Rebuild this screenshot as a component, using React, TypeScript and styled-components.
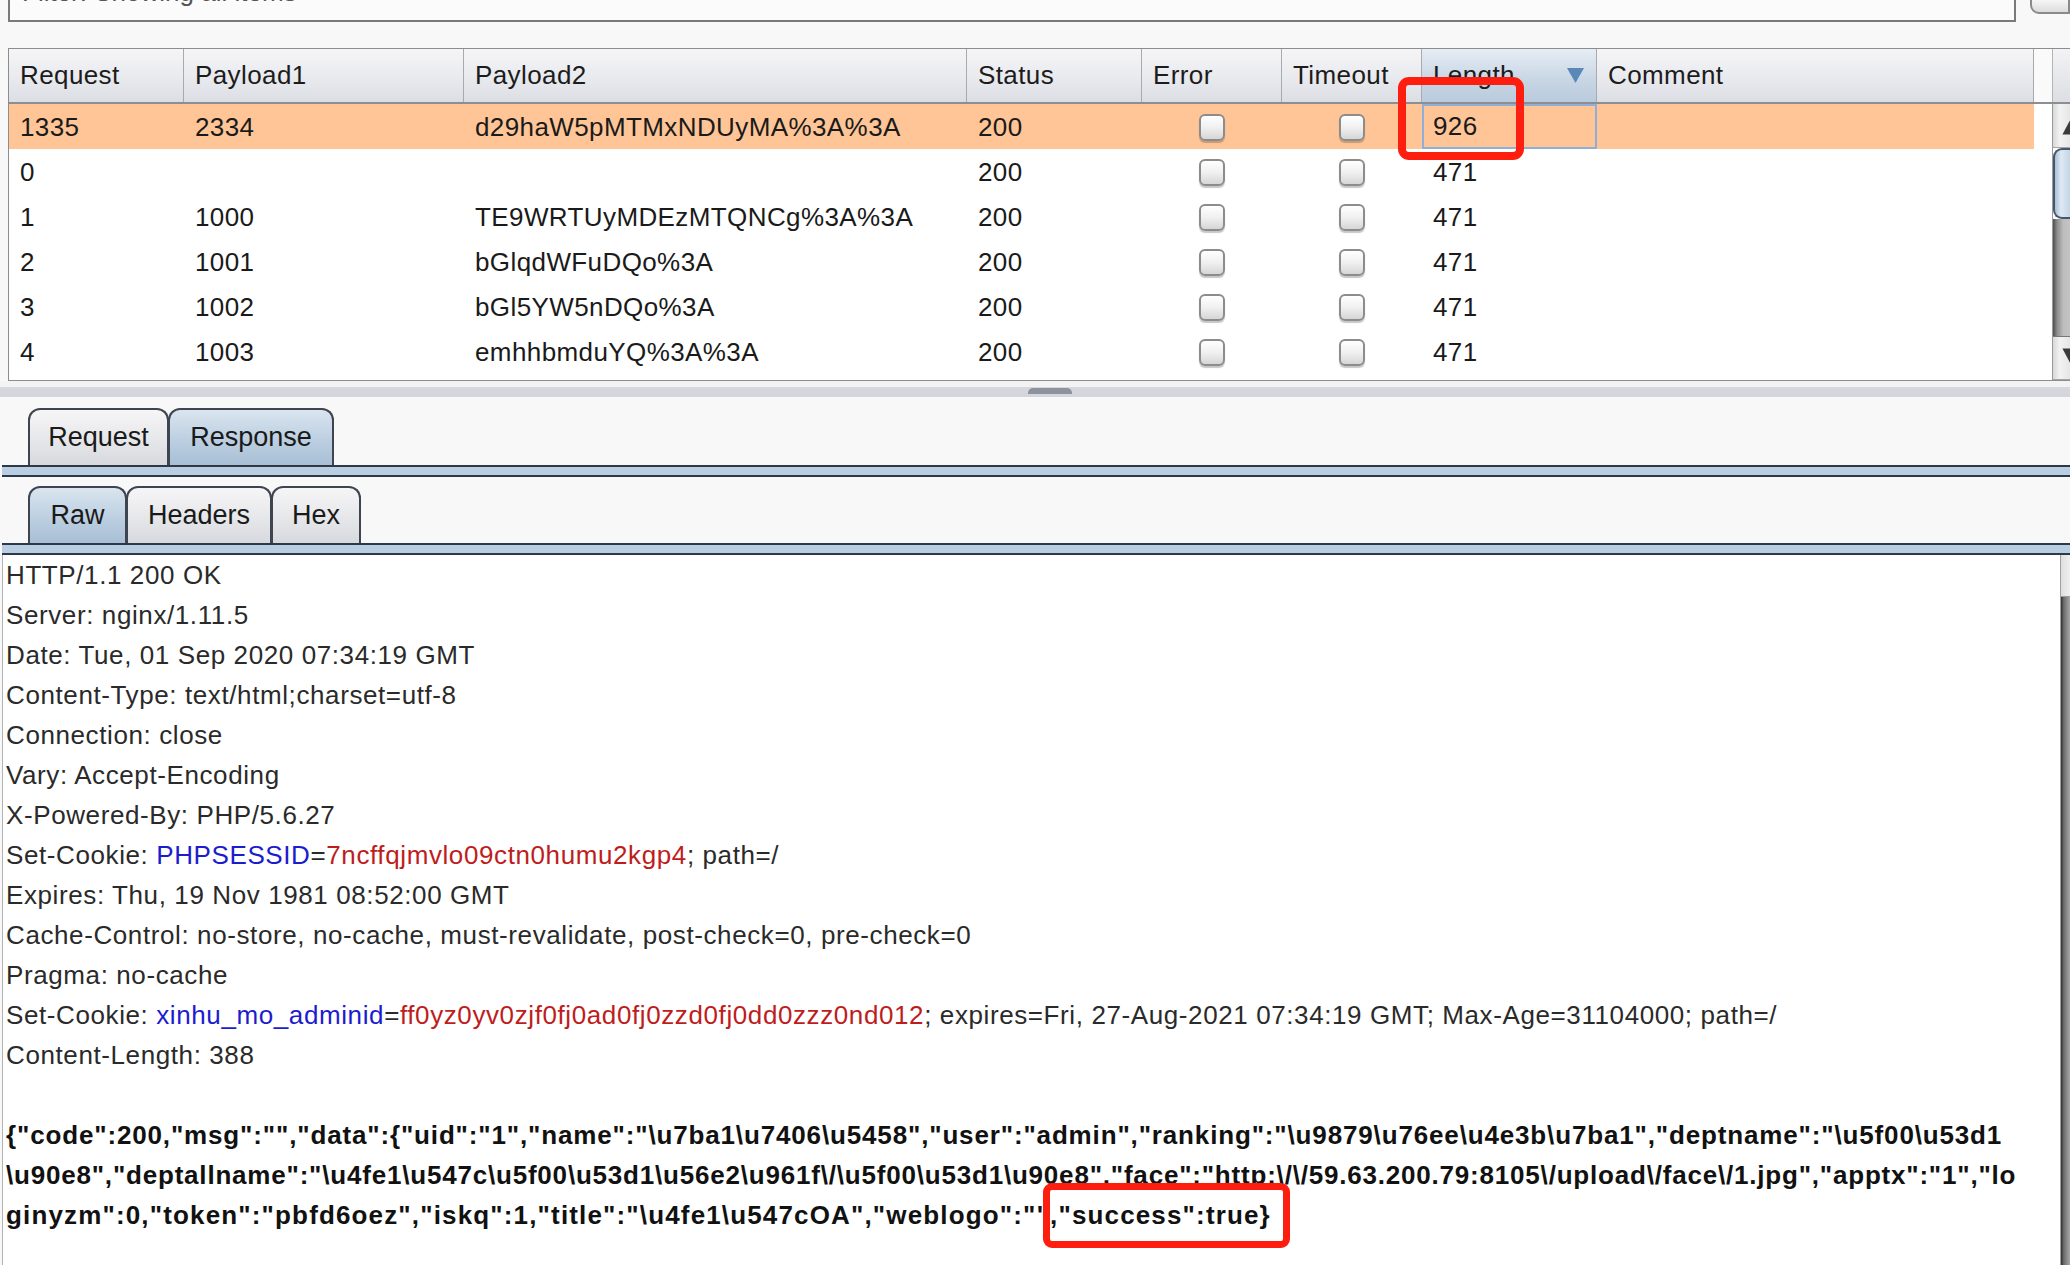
import React from 'react';
import styled, { createGlobalStyle, css } from 'styled-components';

const FONT = `"Liberation Sans", Arial, sans-serif`;

const GlobalStyle = createGlobalStyle`
  html, body { margin: 0; padding: 0; background: #f8f8f8; }
  body { font-family: ${FONT}; overflow: hidden; }
  #root { width: 2070px; height: 1265px; overflow: hidden; }
  *, *::before, *::after { box-sizing: border-box; }
`;

const Page = styled.div`
  width: 2070px;
  height: 1265px;
  display: flex;
  flex-direction: column;
  background: #f8f8f8;
  font-family: ${FONT};
  color: #1b1b1b;
  overflow: hidden;
`;

/* ---------- filter bar (cut off at the top) ---------- */
const FilterRow = styled.div`
  display: flex;
  align-items: flex-end;
  height: 22px;
  flex-shrink: 0;
`;
const FilterBox = styled.div`
  margin-left: 8px;
  width: 2015px;
  height: 22px;
  border: 2px solid #7a7a7a;
  border-top: none;
  background: #fbfbfb;
  overflow: hidden;
  padding-left: 12px;
`;
const FilterText = styled.span`
  display: block;
  font-size: 26px;
  line-height: 30px;
  margin-top: -23px;
  color: #555;
  white-space: nowrap;
`;
const HelpButton = styled.div`
  margin-left: 14px;
  width: 40px;
  height: 14px;
  align-self: flex-start;
  border: 2px solid #8a8a8a;
  border-top: none;
  border-radius: 0 0 0 9px;
  background: linear-gradient(#f6f6f6, #dcdcdc);
  flex-shrink: 0;
`;

/* ---------- results table ---------- */
const COLS = '175px 280px 503px 175px 140px 140px 175px 437px';

const TableArea = styled.div`
  margin: 26px 0 0 8px;
  height: 333px;
  flex-shrink: 0;
  border: 1px solid #8d8d8d;
  border-right: none;
  display: flex;
  flex-direction: column;
  background: #fff;
`;
const HeaderRow = styled.div`
  display: flex;
  height: 55px;
  flex-shrink: 0;
  border-bottom: 2px solid #8c8e92;
`;
const HeaderGrid = styled.div`
  display: grid;
  grid-template-columns: ${COLS};
  width: 2025px;
  flex-shrink: 0;
`;
const HeaderCell = styled.div<{ $sorted?: boolean }>`
  display: flex;
  align-items: center;
  justify-content: space-between;
  padding: 0 12px 0 11px;
  font-size: 26px;
  letter-spacing: 0.4px;
  color: #1c1c1c;
  border-right: 1px solid #a8aaaf;
  white-space: nowrap;
  background: ${(p) =>
    p.$sorted
      ? 'linear-gradient(#e6edf4, #c9d7e5 55%, #b9cbdc)'
      : 'linear-gradient(#f5f5f7, #e9eaee 55%, #dcdee3)'};
`;
const SortArrow = styled.svg`
  width: 17px;
  height: 15px;
  flex-shrink: 0;
`;
const HeaderGap = styled.div`
  width: 18px;
  flex-shrink: 0;
  background: #fafafa;
`;
const HeaderCorner = styled.div`
  flex: 1;
  border-left: 1px solid #b5b5b5;
  background: linear-gradient(#f3f3f5, #dcdee3);
`;
const TableBody = styled.div`
  display: flex;
  flex: 1;
  min-height: 0;
`;
const RowsViewport = styled.div`
  flex: 1;
  background: #fff;
`;
const Row = styled.div<{ $selected?: boolean }>`
  display: grid;
  grid-template-columns: ${COLS};
  width: 2025px;
  height: 45px;
  background: ${(p) => (p.$selected ? '#ffc596' : '#fff')};
`;
const Cell = styled.div<{ $center?: boolean; $focus?: boolean }>`
  display: flex;
  align-items: center;
  padding: 2px 0 0 11px;
  font-size: 26px;
  letter-spacing: 0.4px;
  color: #1a1a1a;
  white-space: nowrap;
  position: relative;
  ${(p) =>
    p.$center &&
    css`
      justify-content: center;
      padding: 2px 0 0 0;
    `}
  ${(p) =>
    p.$focus &&
    css`
      border: 2px solid #8eb0d8;
      padding: 0 0 0 9px;
      &::after {
        content: '';
        position: absolute;
        left: -26px;
        top: -29px;
        width: 126px;
        height: 83px;
        border: 8px solid #fe1e10;
        border-radius: 11px;
        pointer-events: none;
      }
    `}
`;
const CheckBox = styled.div`
  width: 26px;
  height: 27px;
  border: 2px solid #8c8c8c;
  border-radius: 6px;
  background: linear-gradient(#ffffff, #f0f0f0 50%, #d6d6d6);
  box-shadow: 0 2px 1px rgba(0, 0, 0, 0.22);
`;

/* table vertical scrollbar (cut at window edge) */
const VScroll = styled.div`
  width: 18px;
  flex-shrink: 0;
  display: flex;
  flex-direction: column;
  border-left: 1px solid #9a9a9a;
`;
const ScrollButton = styled.div<{ $h: number }>`
  height: ${(p) => p.$h}px;
  flex-shrink: 0;
  background: linear-gradient(to right, #d8d8d8, #f2f2f2 40%, #e6e6e6);
  border-bottom: 1px solid #a5a5a5;
  display: flex;
`;
const Thumb = styled.div`
  height: 71px;
  flex-shrink: 0;
  border: 2px solid #46566b;
  border-right: none;
  border-radius: 9px 0 0 9px;
  background: linear-gradient(to right, #a9c0d7, #dfe9f3 40%, #c3d5e6);
`;
const Track = styled.div`
  flex: 1;
  background: linear-gradient(to right, #4e4e4e, #8e8e8e 25%, #bdbdbd 60%, #c4c4c4);
  border-bottom: 1px solid #777;
`;

/* split pane divider */
const Divider = styled.div`
  height: 16px;
  flex-shrink: 0;
  display: flex;
  padding-left: 1028px;
  background: linear-gradient(#f3f3f3 0, #f3f3f3 6px, #d6d8dd 6px, #d3d5da 16px);
`;
const DividerHandle = styled.div`
  width: 44px;
  height: 6px;
  margin-top: 7px;
  border-radius: 5px 5px 0 0;
  background: #8d939c;
`;

/* ---------- tabs ---------- */
const TabBar = styled.div<{ $gap: number }>`
  display: flex;
  align-items: flex-end;
  height: 57px;
  margin-top: ${(p) => p.$gap}px;
  padding-left: 28px;
  flex-shrink: 0;
`;
const Tab = styled.div<{ $w: number; $active?: boolean }>`
  width: ${(p) => p.$w}px;
  height: 57px;
  margin-right: -1px;
  display: flex;
  align-items: center;
  justify-content: center;
  font-size: 27px;
  color: #1a1a1a;
  border: 2px solid #3e4551;
  border-bottom: none;
  border-radius: 12px 12px 0 0;
  background: ${(p) =>
    p.$active
      ? 'linear-gradient(#dae5ef, #bccfe1 55%, #a8bfd5)'
      : 'linear-gradient(#f6f6f7, #e6e7ea 55%, #d7d9de)'};
`;
const TabStrip = styled.div`
  height: 12px;
  margin-left: 2px;
  flex-shrink: 0;
  border-top: 2px solid #2f3845;
  border-bottom: 2px solid #2f3845;
  background: #b9cee3;
`;

/* ---------- response text ---------- */
const TextArea = styled.div`
  flex: 1;
  min-height: 0;
  display: flex;
  margin-left: 2px;
  border-left: 1px solid #b3b3b3;
  background: #fff;
`;
const TextContent = styled.div`
  flex: 1;
  padding-left: 3px;
  overflow: hidden;
  font-size: 26px;
  letter-spacing: 0.6px;
  line-height: 40px;
  color: #2a2a2a;
`;
const Line = styled.div<{ $bold?: boolean; $spacing?: number }>`
  height: 40px;
  white-space: pre;
  ${(p) =>
    p.$bold &&
    css`
      font-weight: bold;
      letter-spacing: ${p.$spacing ?? 0.85}px;
      color: #111;
    `}
`;
const CookieName = styled.span`
  color: #1c1ccf;
`;
const CookieValue = styled.span`
  color: #be1d1d;
`;
const Marked = styled.span`
  position: relative;
  &::after {
    content: '';
    position: absolute;
    left: -15px;
    right: -19px;
    top: -17px;
    bottom: -18px;
    border: 7px solid #fe1e10;
    border-radius: 9px;
    pointer-events: none;
  }
`;
const BodyScroll = styled.div`
  width: 10px;
  flex-shrink: 0;
  display: flex;
  flex-direction: column;
  border-left: 1px solid #a0a0a0;
`;
const BodyScrollButton = styled.div`
  height: 42px;
  flex-shrink: 0;
  background: linear-gradient(to right, #dedede, #f0f0f0);
  border-bottom: 1px solid #9a9a9a;
`;
const BodyScrollTrack = styled.div`
  flex: 1;
  background: linear-gradient(to right, #2e2e2e, #6a6a6a 30%, #a8a8a8);
`;

type RowData = {
  req: string;
  p1: string;
  p2: string;
  status: string;
  len: string;
  selected?: boolean;
};

const rows: RowData[] = [
  { req: '1335', p1: '2334', p2: 'd29haW5pMTMxNDUyMA%3A%3A', status: '200', len: '926', selected: true },
  { req: '0', p1: '', p2: '', status: '200', len: '471' },
  { req: '1', p1: '1000', p2: 'TE9WRTUyMDEzMTQNCg%3A%3A', status: '200', len: '471' },
  { req: '2', p1: '1001', p2: 'bGlqdWFuDQo%3A', status: '200', len: '471' },
  { req: '3', p1: '1002', p2: 'bGl5YW5nDQo%3A', status: '200', len: '471' },
  { req: '4', p1: '1003', p2: 'emhhbmduYQ%3A%3A', status: '200', len: '471' },
];

const headers = ['Request', 'Payload1', 'Payload2', 'Status', 'Error', 'Timeout', 'Length', 'Comment'];

const plainLines = [
  'HTTP/1.1 200 OK',
  'Server: nginx/1.11.5',
  'Date: Tue, 01 Sep 2020 07:34:19 GMT',
  'Content-Type: text/html;charset=utf-8',
  'Connection: close',
  'Vary: Accept-Encoding',
  'X-Powered-By: PHP/5.6.27',
];

const json1 =
  '{"code":200,"msg":"","data":{"uid":"1","name":"\\u7ba1\\u7406\\u5458","user":"admin","ranking":"\\u9879\\u76ee\\u4e3b\\u7ba1","deptname":"\\u5f00\\u53d1';
const json2 =
  '\\u90e8","deptallname":"\\u4fe1\\u547c\\u5f00\\u53d1\\u56e2\\u961f\\/\\u5f00\\u53d1\\u90e8","face":"http:\\/\\/59.63.200.79:8105\\/upload\\/face\\/1.jpg","apptx":"1","lo';
const json3a = 'ginyzm":0,"token":"pbfd6oez","iskq":1,"title":"\\u4fe1\\u547cOA","weblogo":"",';
const json3b = '"success":true}';

export default function App() {
  return (
    <>
      <GlobalStyle />
      <Page>
        <FilterRow>
          <FilterBox>
            <FilterText>Filter: Showing all items</FilterText>
          </FilterBox>
          <HelpButton />
        </FilterRow>

        <TableArea>
          <HeaderRow>
            <HeaderGrid>
              {headers.map((h) => (
                <HeaderCell key={h} $sorted={h === 'Length'}>
                  <span>{h}</span>
                  {h === 'Length' && (
                    <SortArrow viewBox="0 0 17 15">
                      <polygon points="0,0 17,0 8.5,15" fill="#5a88b8" />
                    </SortArrow>
                  )}
                </HeaderCell>
              ))}
            </HeaderGrid>
            <HeaderGap />
            <HeaderCorner />
          </HeaderRow>
          <TableBody>
            <RowsViewport>
              {rows.map((r) => (
                <Row key={r.req} $selected={r.selected}>
                  <Cell>{r.req}</Cell>
                  <Cell>{r.p1}</Cell>
                  <Cell>{r.p2}</Cell>
                  <Cell>{r.status}</Cell>
                  <Cell $center>
                    <CheckBox />
                  </Cell>
                  <Cell $center>
                    <CheckBox />
                  </Cell>
                  <Cell $focus={r.selected}>{r.len}</Cell>
                  <Cell />
                </Row>
              ))}
            </RowsViewport>
            <VScroll>
              <ScrollButton $h={44}>
                <svg width="18" height="44" viewBox="0 0 18 44">
                  <polygon points="19,14 10,31 19,31" fill="#3a3a3a" />
                </svg>
              </ScrollButton>
              <Thumb />
              <Track />
              <ScrollButton $h={43}>
                <svg width="18" height="43" viewBox="0 0 18 43">
                  <polygon points="10,11 19,11 19,28" fill="#3a3a3a" />
                </svg>
              </ScrollButton>
            </VScroll>
          </TableBody>
        </TableArea>

        <Divider>
          <DividerHandle />
        </Divider>

        <TabBar $gap={11}>
          <Tab $w={141}>Request</Tab>
          <Tab $w={166} $active>
            Response
          </Tab>
        </TabBar>
        <TabStrip />
        <TabBar $gap={9}>
          <Tab $w={99} $active>
            Raw
          </Tab>
          <Tab $w={146}>Headers</Tab>
          <Tab $w={90}>Hex</Tab>
        </TabBar>
        <TabStrip />

        <TextArea>
          <TextContent>
            {plainLines.map((l) => (
              <Line key={l}>{l}</Line>
            ))}
            <Line>
              {'Set-Cookie: '}
              <CookieName>PHPSESSID</CookieName>=<CookieValue>7ncffqjmvlo09ctn0humu2kgp4</CookieValue>; path=/
            </Line>
            <Line>Expires: Thu, 19 Nov 1981 08:52:00 GMT</Line>
            <Line>Cache-Control: no-store, no-cache, must-revalidate, post-check=0, pre-check=0</Line>
            <Line>Pragma: no-cache</Line>
            <Line>
              {'Set-Cookie: '}
              <CookieName>xinhu_mo_adminid</CookieName>=
              <CookieValue>ff0yz0yv0zjf0fj0ad0fj0zzd0fj0dd0zzz0nd012</CookieValue>
              {'; expires=Fri, 27-Aug-2021 07:34:19 GMT; Max-Age=31104000; path=/'}
            </Line>
            <Line>Content-Length: 388</Line>
            <Line />
            <Line $bold>{json1}</Line>
            <Line $bold $spacing={0.8}>
              {json2}
            </Line>
            <Line $bold $spacing={1.15}>
              {json3a}
              <Marked>{json3b}</Marked>
            </Line>
          </TextContent>
          <BodyScroll>
            <BodyScrollButton />
            <BodyScrollTrack />
          </BodyScroll>
        </TextArea>
      </Page>
    </>
  );
}
